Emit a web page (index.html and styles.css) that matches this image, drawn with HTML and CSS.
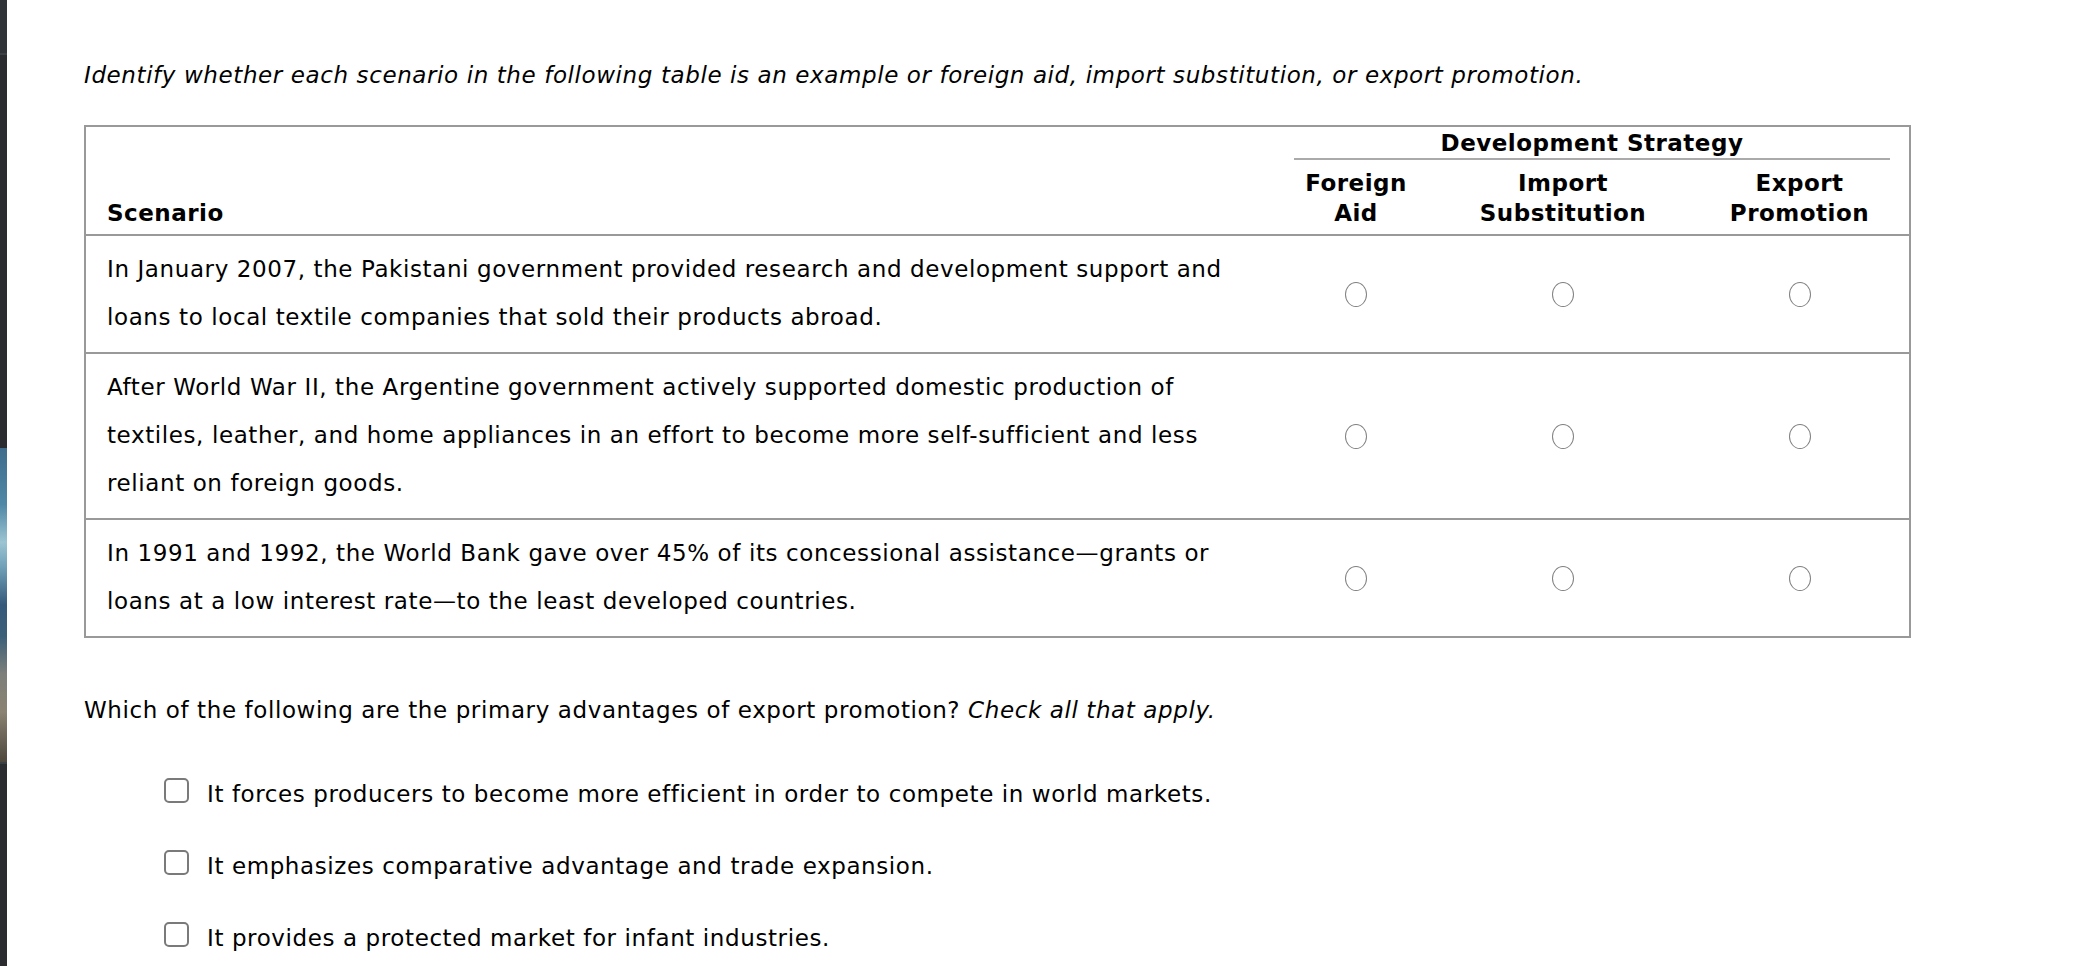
FILE: index.html
```html
<!DOCTYPE html>
<html lang="en">
<head>
<meta charset="utf-8">
<title>Development Strategy</title>
<link rel="stylesheet" href="styles.css">
</head>
<body>
<div class="edge">
  <div class="edge-top"></div>
  <div class="edge-mid"></div>
  <div class="edge-pic"></div>
  <div class="edge-bot"></div>
</div>
<main class="page">
  <p class="intro">Identify whether each scenario in the following table is an example or foreign aid, import substitution, or export promotion.</p>
  <table class="grid">
    <colgroup>
      <col class="c-scn">
      <col class="c-fa">
      <col class="c-is">
      <col class="c-ep">
    </colgroup>
    <thead>
      <tr>
        <th class="scn-head" rowspan="2">Scenario</th>
        <th class="group" colspan="3"><div class="group-label">Development Strategy</div></th>
      </tr>
      <tr>
        <th class="opt">Foreign<br>Aid</th>
        <th class="opt">Import<br>Substitution</th>
        <th class="opt ep">Export<br>Promotion</th>
      </tr>
    </thead>
    <tbody>
      <tr>
        <td class="scn">In January 2007, the Pakistani government provided research and development support and loans to local textile companies that sold their products abroad.</td>
        <td class="pick"><span class="radio"></span></td>
        <td class="pick"><span class="radio"></span></td>
        <td class="pick ep"><span class="radio"></span></td>
      </tr>
      <tr>
        <td class="scn">After World War II, the Argentine government actively supported domestic production of textiles, leather, and home appliances in an effort to become more self-sufficient and less reliant on foreign goods.</td>
        <td class="pick"><span class="radio"></span></td>
        <td class="pick"><span class="radio"></span></td>
        <td class="pick ep"><span class="radio"></span></td>
      </tr>
      <tr>
        <td class="scn">In 1991 and 1992, the World Bank gave over 45% of its concessional assistance—grants or loans at a low interest rate—to the least developed countries.</td>
        <td class="pick"><span class="radio"></span></td>
        <td class="pick"><span class="radio"></span></td>
        <td class="pick ep"><span class="radio"></span></td>
      </tr>
    </tbody>
  </table>
  <p class="question">Which of the following are the primary advantages of export promotion? <em>Check all that apply.</em></p>
  <ul class="choices">
    <li class="choice"><span class="box"></span><span class="choice-text">It forces producers to become more efficient in order to compete in world markets.</span></li>
    <li class="choice"><span class="box"></span><span class="choice-text">It emphasizes comparative advantage and trade expansion.</span></li>
    <li class="choice"><span class="box"></span><span class="choice-text">It provides a protected market for infant industries.</span></li>
  </ul>
</main>
</body>
</html>
```

FILE: styles.css
```css
html, body {
  margin: 0;
  padding: 0;
  background: #fff;
}

body {
  display: flex;
  min-height: 966px;
  font-family: "DejaVu Sans", Verdana, sans-serif;
  font-size: 23px;
  letter-spacing: 0.6px;
  color: #000;
  overflow: hidden;
}

.edge {
  flex: none;
  width: 7px;
  display: flex;
  flex-direction: column;
  background: #2a2c30;
}

.edge-top {
  height: 53px;
  background: #303338;
  border-bottom: 2px solid #3d4046;
}

.edge-mid {
  height: 393px;
  background: #2a2c30;
}

.edge-pic {
  height: 314px;
  background: linear-gradient(180deg, #3f6c8c 0%, #4f88a6 18%, #9cc4d2 30%, #6fa0b8 38%, #35597a 50%, #3c5f78 60%, #7d7f7a 72%, #8a8272 84%, #4d473c 100%);
}

.edge-bot {
  flex: 1;
  background: #2a2c30;
  border-top: 2px solid #3b3e43;
}

.page {
  flex: 1;
  padding: 62px 0 0 77px;
}

.intro {
  margin: 0;
  font-style: italic;
  line-height: 26px;
}

.grid {
  margin-top: 37px;
  width: 1827px;
  table-layout: fixed;
  border-collapse: separate;
  border-spacing: 0;
  border: 2px solid #999;
}

.c-scn { width: 1196px; }
.c-fa { width: 148px; }
.c-is { width: 266px; }
.c-ep { width: 213px; }

.grid th {
  font-weight: 700;
  letter-spacing: 0.5px;
  line-height: 30px;
  padding: 0;
}

.scn-head {
  text-align: left;
  vertical-align: bottom;
  padding: 0 0 6px 21px !important;
}

.group {
  text-align: center;
  padding: 1px 19px 0 12px !important;
}

.group-label {
  border-bottom: 2px solid #aaa;
}

.opt {
  text-align: center;
  vertical-align: bottom;
  padding: 8px 0 6px !important;
}

.opt.ep {
  padding-right: 6px !important;
}

.grid td {
  border-top: 2px solid #999;
}

.scn {
  line-height: 48px;
  padding: 9px 25px 11px 21px;
  vertical-align: top;
}

.pick {
  text-align: center;
  vertical-align: middle;
}

.pick.ep {
  padding-right: 6px;
}

.radio {
  display: block;
  box-sizing: border-box;
  width: 22px;
  height: 25px;
  margin: 0 auto;
  border: 1.6px solid #808080;
  border-radius: 50%;
}

.question {
  margin: 59px 0 0;
  line-height: 26px;
}

.choices {
  list-style: none;
  margin: 55px 0 0;
  padding: 0 0 0 80px;
}

.choice {
  display: flex;
  align-items: flex-start;
  gap: 18px;
  margin-bottom: 43px;
}

.box {
  flex: none;
  box-sizing: border-box;
  width: 25px;
  height: 25px;
  border: 2px solid #7a7a7a;
  border-radius: 5px;
}

.choice-text {
  padding-top: 3px;
  line-height: 26px;
}
```
